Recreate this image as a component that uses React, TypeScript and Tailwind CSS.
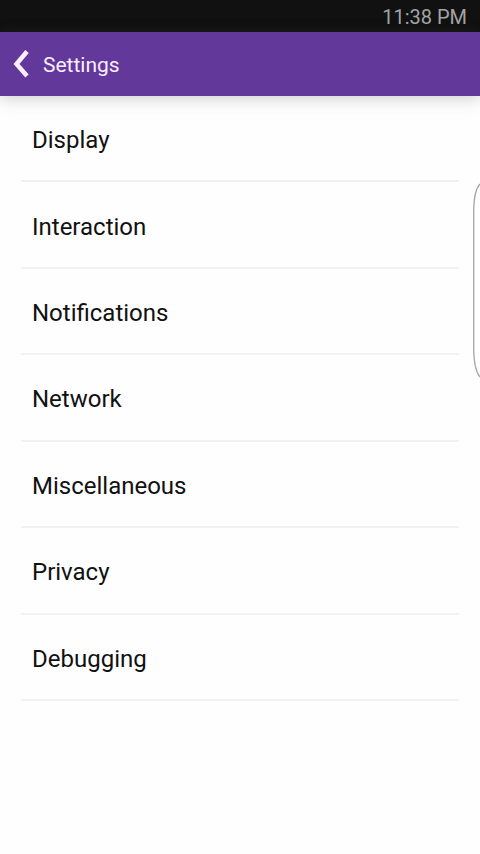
const sections = [
  "Display",
  "Interaction",
  "Notifications",
  "Network",
  "Miscellaneous",
  "Privacy",
  "Debugging",
];

export default function App() {
  return (
    <div className="relative min-h-screen bg-[#fefefe] font-[Roboto,sans-serif] text-[#111111]">
      <div className="flex h-8 items-center justify-end bg-[#111111] px-[13px] pt-0.5 text-xl text-[#a3a3a3]">
        <time>11:38 PM</time>
      </div>
      <header className="flex h-16 items-center bg-[#62389b] px-[13px] text-[#fbeeff] shadow-[0_3px_14px_rgba(80,75,85,0.25)]">
        <button type="button" aria-label="Back" className="flex h-12 items-center pr-3">
          <svg width="18" height="30" viewBox="0 0 18 30" fill="none" stroke="currentColor" strokeWidth="4.500" aria-hidden="true">
            <path d="M14 2.500 3.500 15 14 27" />
          </svg>
        </button>
        <h1 className="pt-1 text-[21px]">Settings</h1>
      </header>
      <main className="px-[21px]">
        <ul className="grid min-h-[605px] auto-rows-fr">
          {sections.map((name) => (
            <li key={name} className="flex border-b-2 border-[#f1f1f1]">
              <button type="button" className="flex w-full items-center px-[11px] pt-1 text-left text-2xl">
                {name}
              </button>
            </li>
          ))}
        </ul>
      </main>
      <svg className="absolute top-[180px] right-0" width="8" height="202" viewBox="0 0 8 202" fill="none" stroke="#a6a6a6" strokeWidth="1.300" aria-hidden="true">
        <path d="M8 4C4 8 2 16 1.700 30v140c.3 14 2 22 6.300 27" />
      </svg>
    </div>
  );
}
